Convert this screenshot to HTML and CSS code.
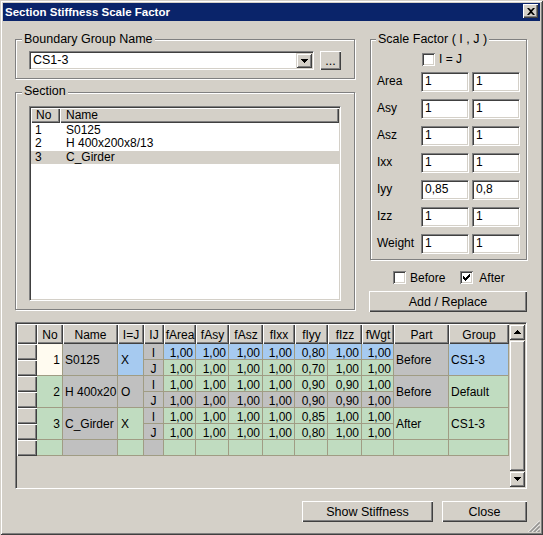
FILE: index.html
```html
<!DOCTYPE html>
<html>
<head>
<meta charset="utf-8">
<title>Section Stiffness Scale Factor</title>
<link rel="stylesheet" href="styles.css">
</head>
<body>
<div class="window">
  <div class="titlebar">
    <span class="title">Section Stiffness Scale Factor</span>
    <span class="tb-close"><svg width="8" height="7" viewBox="0 0 8 7"><path d="M0 0h2l2 2 2-2h2L5 3.5 8 7H6L4 5 2 7H0l3-3.5z" fill="#000"/></svg></span>
  </div>
  <div class="content">
    <div class="top">
      <div class="left-col">
        <div class="group group-boundary">
          <span class="legend">Boundary Group Name</span>
          <div class="combo-row">
            <div class="combo">
              <span class="combo-text">CS1-3</span>
              <span class="combo-btn"><svg width="7" height="4" viewBox="0 0 7 4"><path d="M0 0h7v1H0zM1 1h5v1H1zM2 2h3v1H2zM3 3h1v1H3z" fill="#000"/></svg></span>
            </div>
            <span class="btn btn-dots">...</span>
          </div>
        </div>
        <div class="group group-section">
          <span class="legend">Section</span>
          <div class="listbox">
            <div class="list-head"><span class="lh lh-no">No</span><span class="lh lh-name">Name</span></div>
            <div class="list-rows">
              <div class="list-row"><span class="lc-no">1</span><span class="lc-name">S0125</span></div>
              <div class="list-row"><span class="lc-no">2</span><span class="lc-name">H 400x200x8/13</span></div>
              <div class="list-row sel"><span class="lc-no">3</span><span class="lc-name">C_Girder</span></div>
            </div>
          </div>
        </div>
      </div>
      <div class="right-col">
        <div class="group group-scale">
          <span class="legend">Scale Factor ( I , J )</span>
          <div class="ij-row"><span class="check"></span><span class="ij-label">I = J</span></div>
          <div class="sf-rows">
            <div class="sf-row"><span class="sf-label">Area</span><span class="field">1</span><span class="field">1</span></div>
            <div class="sf-row"><span class="sf-label">Asy</span><span class="field">1</span><span class="field">1</span></div>
            <div class="sf-row"><span class="sf-label">Asz</span><span class="field">1</span><span class="field">1</span></div>
            <div class="sf-row"><span class="sf-label">Ixx</span><span class="field">1</span><span class="field">1</span></div>
            <div class="sf-row"><span class="sf-label">Iyy</span><span class="field">0,85</span><span class="field">0,8</span></div>
            <div class="sf-row"><span class="sf-label">Izz</span><span class="field">1</span><span class="field">1</span></div>
            <div class="sf-row"><span class="sf-label">Weight</span><span class="field">1</span><span class="field">1</span></div>
          </div>
        </div>
        <div class="ba-row">
          <span class="check"></span><span class="ba-label">Before</span>
          <span class="check check-after"><svg width="13" height="13" viewBox="0 0 13 13"><path d="M9 3h1v1H9zM8 4h2v1H8zM3 5h1v1H3zM7 5h3v1H7zM3 6h2v1H3zM6 6h3v1H6zM3 7h5v1H3zM4 8h3v1H4zM5 9h1v1H5z" fill="#000"/></svg></span><span class="ba-label ba-after">After</span>
        </div>
        <div class="btn btn-add">Add / Replace</div>
      </div>
    </div>

    <div class="gridframe">
      <div class="grid">
        <div class="gh"></div>
        <div class="gh">No</div>
        <div class="gh">Name</div>
        <div class="gh">I=J</div>
        <div class="gh">IJ</div>
        <div class="gh">fArea</div>
        <div class="gh">fAsy</div>
        <div class="gh">fAsz</div>
        <div class="gh">fIxx</div>
        <div class="gh">fIyy</div>
        <div class="gh">fIzz</div>
        <div class="gh">fWgt</div>
        <div class="gh">Part</div>
        <div class="gh">Group</div>

        <!-- row 1 I -->
        <div class="rh"></div>
        <div class="c span2 w num">1</div>
        <div class="c span2 y lft">S0125</div>
        <div class="c span2 b ij">X</div>
        <div class="c y ctr">I</div>
        <div class="c b num">1,00</div><div class="c b num">1,00</div><div class="c b num">1,00</div><div class="c b num">1,00</div><div class="c b num">0,80</div><div class="c b num">1,00</div><div class="c b num">1,00</div>
        <div class="c span2 y lft">Before</div>
        <div class="c span2 b lft">CS1-3</div>
        <!-- row 1 J -->
        <div class="rh"></div>
        <div class="c y ctr">J</div>
        <div class="c g num">1,00</div><div class="c g num">1,00</div><div class="c g num">1,00</div><div class="c g num">1,00</div><div class="c g num">0,70</div><div class="c g num">1,00</div><div class="c g num">1,00</div>

        <!-- row 2 I -->
        <div class="rh"></div>
        <div class="c span2 g num">2</div>
        <div class="c span2 y lft">H 400x20</div>
        <div class="c span2 y ij">O</div>
        <div class="c y ctr">I</div>
        <div class="c g num">1,00</div><div class="c g num">1,00</div><div class="c g num">1,00</div><div class="c g num">1,00</div><div class="c g num">0,90</div><div class="c g num">0,90</div><div class="c g num">1,00</div>
        <div class="c span2 y lft">Before</div>
        <div class="c span2 g lft">Default</div>
        <!-- row 2 J -->
        <div class="rh"></div>
        <div class="c y ctr">J</div>
        <div class="c y num">1,00</div><div class="c y num">1,00</div><div class="c y num">1,00</div><div class="c y num">1,00</div><div class="c y num">0,90</div><div class="c y num">0,90</div><div class="c y num">1,00</div>

        <!-- row 3 I -->
        <div class="rh"></div>
        <div class="c span2 g num">3</div>
        <div class="c span2 y lft">C_Girder</div>
        <div class="c span2 g ij">X</div>
        <div class="c y ctr">I</div>
        <div class="c g num">1,00</div><div class="c g num">1,00</div><div class="c g num">1,00</div><div class="c g num">1,00</div><div class="c g num">0,85</div><div class="c g num">1,00</div><div class="c g num">1,00</div>
        <div class="c span2 g lft">After</div>
        <div class="c span2 g lft">CS1-3</div>
        <!-- row 3 J -->
        <div class="rh"></div>
        <div class="c y ctr">J</div>
        <div class="c g num">1,00</div><div class="c g num">1,00</div><div class="c g num">1,00</div><div class="c g num">1,00</div><div class="c g num">0,80</div><div class="c g num">1,00</div><div class="c g num">1,00</div>

        <!-- empty row -->
        <div class="rh"></div>
        <div class="c g"></div>
        <div class="c y"></div>
        <div class="c g"></div>
        <div class="c y"></div>
        <div class="c g"></div><div class="c g"></div><div class="c g"></div><div class="c g"></div><div class="c g"></div><div class="c g"></div><div class="c g"></div>
        <div class="c g"></div>
        <div class="c g"></div>
      </div>
      <div class="vscroll">
        <span class="sb-btn"><svg width="7" height="4" viewBox="0 0 7 4"><path d="M3 0h1v1H3zM2 1h3v1H2zM1 2h5v1H1zM0 3h7v1H0z" fill="#000"/></svg></span>
        <span class="sb-thumb"></span>
        <span class="sb-btn"><svg width="7" height="4" viewBox="0 0 7 4"><path d="M0 0h7v1H0zM1 1h5v1H1zM2 2h3v1H2zM3 3h1v1H3z" fill="#000"/></svg></span>
      </div>
    </div>

    <div class="bottom-row">
      <span class="btn btn-show">Show Stiffness</span>
      <span class="btn btn-close">Close</span>
    </div>
  </div>
  <svg class="grip" width="12" height="12" viewBox="0 0 12 12">
    <path d="M12 0.5L0.5 12M12 4.5L4.5 12M12 8.5L8.5 12" stroke="#fff" stroke-width="1"/>
    <path d="M12 1.5L1.5 12M12 2.5L2.5 12M12 5.5L5.5 12M12 6.5L6.5 12M12 9.5L9.5 12M12 10.5L10.5 12" stroke="#808080" stroke-width="1"/>
  </svg>
</div>
</body>
</html>
```

FILE: styles.css
```css
html, body {
  margin: 0;
  padding: 0;
  background: #d4d0c8;
}

.window {
  position: relative;
  width: 543px;
  height: 535px;
  box-sizing: border-box;
  padding: 3px;
  background: #d4d0c8;
  box-shadow: inset 1px 1px 0 #d4d0c8, inset -1px -1px 0 #404040, inset 2px 2px 0 #ffffff, inset -2px -2px 0 #808080;
  font-family: "Liberation Sans", Arial, sans-serif;
  font-size: 12px;
  color: #000;
  display: flex;
  flex-direction: column;
}

/* title bar */
.titlebar {
  height: 18px;
  flex: none;
  background: #0a246a;
  display: flex;
  align-items: flex-start;
  justify-content: space-between;
}
.title {
  color: #fff;
  font-weight: bold;
  font-size: 11.5px;
  line-height: 18px;
  padding-left: 2px;
  white-space: nowrap;
}
.tb-close {
  width: 15px;
  height: 14px;
  margin: 1px 2px 0 0;
  background: #d4d0c8;
  box-shadow: inset 1px 1px 0 #fff, inset -1px -1px 0 #404040, inset -2px -2px 0 #808080;
  display: flex;
  align-items: center;
  justify-content: center;
}

.content {
  padding: 18px 13px 0 12px;
  display: flex;
  flex-direction: column;
}

.top {
  display: flex;
  gap: 14px;
}
.left-col {
  width: 340px;
  display: flex;
  flex-direction: column;
  gap: 13px;
}
.right-col {
  width: 158px;
  display: flex;
  flex-direction: column;
}

/* group boxes */
.group {
  box-sizing: border-box;
  border: 1px solid #808080;
  box-shadow: 1px 1px 0 #fff, inset 1px 1px 0 #fff;
  display: flex;
  flex-direction: column;
  align-items: flex-start;
}
.legend {
  margin: -8px 0 0 6px;
  padding: 0 2px;
  background: #d4d0c8;
  font-size: 12.5px;
  line-height: 14px;
  white-space: nowrap;
}
.group-boundary { height: 40px; }
.group-section { height: 218px; }
.group-section .legend { margin-top: -9px; }
.group-scale {
  margin-left: 1px;
  width: 157px;
  height: 221px;
}
.group-scale .legend { margin-left: 5px; }

/* combo */
.combo-row {
  display: flex;
  margin: 5px 0 0 13px;
}
.combo {
  width: 285px;
  height: 19px;
  box-sizing: border-box;
  background: #fff;
  border: 1px solid;
  border-color: #808080 #fff #fff #808080;
  box-shadow: inset 1px 1px 0 #404040, inset -1px -1px 0 #d4d0c8;
  padding: 1px;
  display: flex;
}
.combo-text {
  flex: 1;
  padding-left: 2px;
  font-size: 12.5px;
  line-height: 15px;
}
.combo-btn {
  width: 16px;
  height: 15px;
  background: #d4d0c8;
  box-shadow: inset 1px 1px 0 #d4d0c8, inset -1px -1px 0 #404040, inset 2px 2px 0 #fff, inset -2px -2px 0 #808080;
  display: flex;
  align-items: center;
  justify-content: center;
}

/* buttons */
.btn {
  box-sizing: border-box;
  background: #d4d0c8;
  box-shadow: inset 1px 1px 0 #fff, inset -1px -1px 0 #404040, inset -2px -2px 0 #808080;
  display: flex;
  align-items: center;
  justify-content: center;
  font-size: 12.5px;
  white-space: nowrap;
}
.btn-dots {
  width: 21px;
  height: 19px;
  margin-left: 6px;
  line-height: 14px;
}
.btn-add {
  margin-top: 7px;
  width: 158px;
  height: 21px;
}
.btn-show {
  width: 131px;
  height: 21px;
}
.btn-close {
  width: 85px;
  height: 21px;
}

/* listbox */
.listbox {
  margin: 8px 0 0 13px;
  width: 312px;
  height: 195px;
  box-sizing: border-box;
  background: #fff;
  border: 1px solid;
  border-color: #808080 #fff #fff #808080;
  box-shadow: inset 1px 1px 0 #404040, inset -1px -1px 0 #d4d0c8;
  padding: 1px;
}
.list-head {
  display: grid;
  grid-template-columns: 29px 1fr;
  height: 15px;
}
.lh {
  background: #d4d0c8;
  box-shadow: inset 1px 1px 0 #fff, inset -1px -1px 0 #404040, inset -2px -2px 0 #808080;
  line-height: 15px;
}
.lh-no { padding-left: 5px; }
.lh-name { padding-left: 6px; }
.list-rows { padding-top: 1px; }
.list-row {
  display: grid;
  grid-template-columns: 29px 1fr;
  height: 13.33px;
  line-height: 13.33px;
}
.list-row.sel { background: #d4d0c8; }
.lc-no { padding-left: 4px; }
.lc-name { padding-left: 6px; }

/* scale factor */
.ij-row {
  display: flex;
  align-items: center;
  margin: 7px 0 0 51px;
  height: 13px;
}
.ij-label {
  margin-left: 4px;
  line-height: 13px;
}
.check {
  flex: none;
  width: 13px;
  height: 13px;
  box-sizing: border-box;
  background: #fff;
  box-shadow: inset 1px 1px 0 #808080, inset -1px -1px 0 #fff, inset 2px 2px 0 #404040, inset -2px -2px 0 #d4d0c8;
  display: block;
}
.check svg { display: block; }
.sf-rows {
  margin: 6px 0 0 6px;
  display: flex;
  flex-direction: column;
  gap: 7px;
}
.sf-row {
  display: flex;
  height: 20px;
}
.sf-label {
  width: 44px;
  line-height: 18px;
}
.field {
  width: 48px;
  height: 20px;
  box-sizing: border-box;
  background: #fff;
  border: 1px solid;
  border-color: #808080 #fff #fff #808080;
  box-shadow: inset 1px 1px 0 #404040, inset -1px -1px 0 #d4d0c8;
  padding: 1px 1px 1px 3px;
  line-height: 14px;
}
.field + .field { margin-left: 3px; }

.ba-row {
  display: flex;
  align-items: center;
  margin-top: 11px;
  padding-left: 24px;
  height: 13px;
}
.ba-label {
  margin-left: 4px;
  line-height: 12px;
}
.check-after { margin-left: 15px; }
.ba-after { margin-left: 6px; }

/* grid */
.gridframe {
  margin-top: 10px;
  width: 512px;
  height: 167px;
  box-sizing: border-box;
  border: 1px solid;
  border-color: #808080 #fff #fff #808080;
  box-shadow: inset 1px 1px 0 #404040, inset -1px -1px 0 #d4d0c8;
  padding: 1px;
  display: flex;
  background: #d4d0c8;
}
.grid {
  width: 492px;
  display: grid;
  grid-template-columns: 20px 26px 55px 26px 20px 32px 33px 34px 32px 33px 34px 32px 55px 60px;
  grid-template-rows: 20px repeat(7, 16px);
  align-content: start;
  font-size: 12px;
}
.gh, .rh {
  box-sizing: border-box;
  background: #d4d0c8;
  box-shadow: inset 1px 1px 0 #fff, inset -1px -1px 0 #404040, inset -2px -2px 0 #808080;
}
.gh {
  text-align: center;
  padding-top: 2px;
  line-height: 18px;
  overflow: hidden;
  white-space: nowrap;
}
.c {
  box-sizing: border-box;
  border-right: 1px solid #a09c84;
  border-bottom: 1px solid #a09c84;
  overflow: hidden;
  white-space: nowrap;
  padding-top: 3px;
  line-height: 12px;
}
.num { text-align: right; padding-right: 2px; }
.lft { padding-left: 2px; }
.ij { padding-left: 3px; }
.ctr { text-align: center; }
.span2 {
  grid-row: span 2;
  display: flex;
  align-items: center;
  padding-top: 1px;
  line-height: 14px;
}
.span2.num { justify-content: flex-end; }
.g { background: #c0dcc0; }
.b { background: #a6caf0; }
.y { background: #c0c0c0; }
.w { background: #fffbf0; }

.vscroll {
  width: 16px;
  display: flex;
  flex-direction: column;
}
.sb-btn, .sb-thumb {
  background: #d4d0c8;
  box-shadow: inset 1px 1px 0 #d4d0c8, inset -1px -1px 0 #404040, inset 2px 2px 0 #fff, inset -2px -2px 0 #808080;
}
.sb-btn {
  flex: none;
  width: 16px;
  height: 16px;
  display: flex;
  align-items: center;
  justify-content: center;
}
.sb-thumb { flex: 1; }

.bottom-row {
  display: flex;
  justify-content: flex-end;
  gap: 9px;
  margin-top: 12px;
}

.grip {
  position: absolute;
  right: 3px;
  bottom: 3px;
}
```
